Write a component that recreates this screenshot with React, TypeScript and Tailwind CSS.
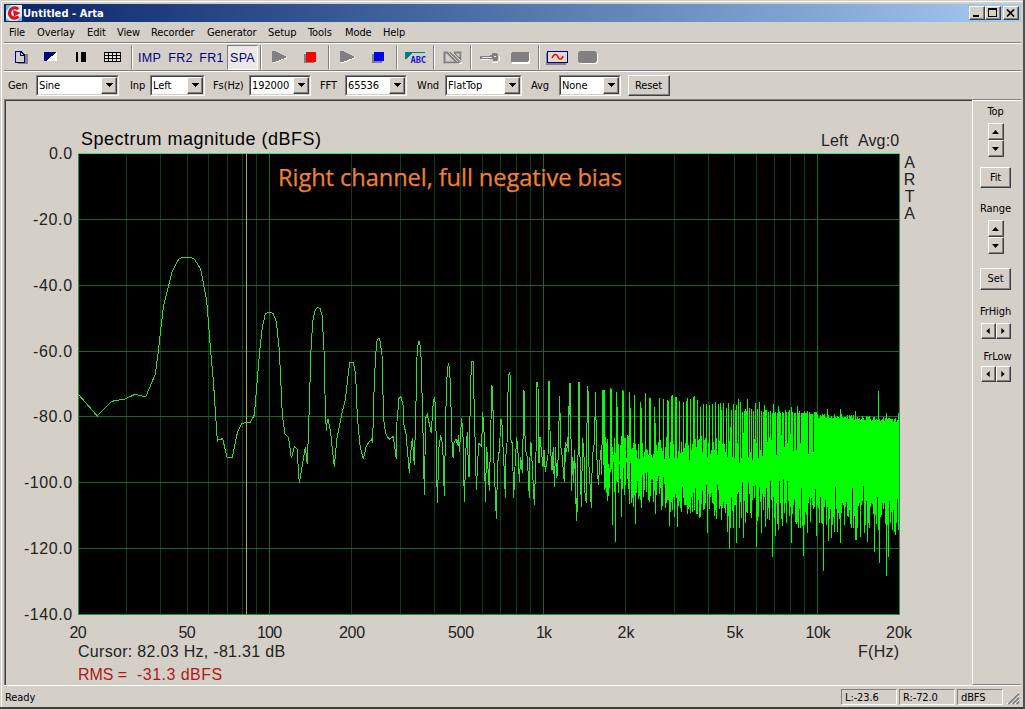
import type { ReactNode } from "react";

type Point = [number, number];

const MENU: [string, string][] = [
  ["File", "w-[28px]"], ["Overlay", "w-[50px]"], ["Edit", "w-[30px]"], ["View", "w-[34px]"],
  ["Recorder", "w-[56px]"], ["Generator", "w-[61px]"], ["Setup", "w-[40px]"], ["Tools", "w-[37px]"],
  ["Mode", "w-[38px]"], ["Help", "w-[33px]"],
];

/* ---------- spectrum data (thirds of a pixel, relative to each segment origin) ---------- */
const LOW: Point[] = [[25,493],[82,558],[125,514],[165,507],[195,493],[227,501],[256,432],[265,365],[272,300],[281,225],[295,170],[306,125],[327,86],[340,82],[360,82],[372,86],[392,117],[401,165],[410,210],[422,365],[430,450],[442,633],[444,630],[458,626],[471,682],[487,682],[503,604],[515,581],[530,576],[541,577],[553,555],[569,363],[577,292],[586,252],[597,246],[609,250],[619,275],[628,360],[637,555],[645,612],[656,624],[664,685],[673,650],[681,657],[688,760],[706,650],[712,703],[717,555],[723,360],[728,275],[736,238],[744,232],[750,235],[757,258],[757,270]];
const MID: Point[] = [[7,0],[12,90],[16,265],[19,334],[21,310],[24,298],[31,330],[43,442],[50,360],[67,275],[76,240],[85,160],[89,127],[100,127],[107,165],[112,290],[120,376],[130,418],[139,377],[155,357],[158,370],[161,240],[166,120],[170,65],[175,55],[179,56],[186,105],[191,300],[197,340],[207,358],[220,349],[229,418],[231,305],[237,235],[243,230],[249,255],[251,310],[258,342],[268,458],[272,400],[277,355],[283,434],[287,290],[291,110],[295,64],[299,64],[303,110],[308,290],[313,524],[317,295],[322,284],[334,340],[338,265],[343,230],[347,260],[349,400],[352,548],[357,380],[362,346],[368,375],[373,527],[377,290],[381,170],[385,130],[389,145],[394,290],[397,400],[400,415],[402,370],[408,358],[413,375],[415,345],[418,395],[425,294],[429,350],[433,545],[438,385],[442,337],[446,468],[449,468],[450,290],[454,125],[460,125],[463,290],[466,380],[469,509],[476,370],[485,378],[488,275],[493,350],[496,545],[500,380],[508,512],[513,300],[515,198],[518,200],[521,405],[529,596],[533,430],[538,390],[543,298],[547,320],[550,410],[553,450],[556,533],[557,415],[561,370],[565,170],[568,157],[571,170],[573,360],[577,370],[581,535],[585,440],[590,352],[595,410],[598,487],[602,410],[607,458],[612,211],[616,390],[622,410],[628,533],[630,410],[633,367],[643,554],[648,400],[651,187],[654,200],[657,430],[660,350],[669,440],[672,390],[676,455],[684,405],[687,182],[691,380],[696,450],[700,380],[703,500],[707,380],[709,475],[713,460],[719,227],[722,375],[726,405],[733,487],[737,370],[745,385],[749,190],[752,190],[754,512],[757,410],[760,490],[763,390],[767,500],[769,602],[773,520],[776,187],[779,187]];
const HIGH: Point[] = [[20,275],[26,210],[28,69],[32,69],[34,392],[38,295],[40,360],[44,270],[50,482],[53,405],[56,66],[59,66],[60,290],[64,440],[68,235],[72,290],[75,400],[79,430],[82,78],[85,100],[87,320],[94,443],[97,290],[103,250],[107,96],[109,260],[115,375],[122,270],[125,345],[128,89]];

/* ---------- dense part: one vertical bar per column ---------- */
const HARMONICS: Point[] = [[129,89],[132,89],[150,84],[153,86],[170,96],[172,140],[188,89],[191,93],[207,96],[210,145],[223,105],[240,126],[243,145],[255,99],[257,99],[269,114],[272,114],[284,141],[287,190],[298,114],[311,117],[323,120],[326,123],[334,108],[337,105],[347,111],[350,111],[359,123],[371,126],[380,123],[383,114],[392,118],[401,111],[404,108],[413,120],[422,141],[431,132],[440,132],[449,136],[458,132],[467,126],[475,132],[482,129],[485,150],[491,129],[499,143],[506,129],[514,147],[520,132],[527,135],[535,117],[538,135]];
const DIPS: Point[] = [[137,385],[142,422],[157,495],[163,395],[166,545],[175,400],[185,470],[193,405],[214,430],[226,491],[230,400],[243,443],[250,410],[259,395],[267,425],[281,425],[286,461],[299,403],[304,450],[318,428],[329,497],[332,455],[338,450],[344,470],[352,500],[362,445],[374,435],[378,435],[386,446],[398,455],[404,450],[412,461],[430,450],[437,428],[443,518],[452,410],[467,450],[470,476],[485,480],[495,460],[503,515],[509,568],[519,505],[524,443],[530,548],[538,505]];
const DIPS_TOP: Point[] = [[1,443],[4,350],[10,445],[16,375],[19,489],[25,335],[28,445],[37,305],[40,475],[47,430],[55,308],[62,400],[70,318],[76,315],[79,500],[88,320],[93,460],[100,390],[106,442],[109,325],[118,420],[121,302],[127,530],[130,352],[137,467],[146,450],[148,302],[157,437],[160,296],[166,370],[172,302],[184,488],[190,375],[195,425],[205,445],[211,445],[214,325],[220,527],[226,395],[232,458],[238,350],[241,425],[256,328],[259,467],[268,430],[272,350],[280,572],[286,360],[296,482],[305,473],[314,455],[316,322],[322,455],[332,490],[344,435],[346,380],[356,410],[366,325],[375,480],[378,480],[382,445],[391,470],[401,318],[404,460],[412,485],[421,382],[433,515],[442,352],[448,550],[453,405],[457,370],[463,370],[469,587],[476,530],[479,362],[482,430],[496,465],[500,430],[502,358],[506,450]];
const GAPS: Point[] = [[1,140],[7,232],[13,234],[23,190],[28,248],[34,235],[40,160],[55,232],[61,215],[67,240],[73,178],[79,190],[86,235],[92,210],[97,228],[112,185],[118,170],[124,180],[139,225],[154,165],[163,200],[172,190],[181,163],[190,212],[199,210],[211,190],[235,222],[250,215]];
const SPIKES: Point[] = [[10,72],[19,75],[25,57],[31,66],[52,57],[76,70],[88,66],[103,74],[130,72],[145,78],[185,82],[202,78],[292,87],[331,88],[376,94],[445,33],[469,98],[505,98]];

const rand = (n: number) => {
  const v = Math.sin(n * 127.1 + 11.7) * 43758.5453;
  return v - Math.floor(v);
};

const columns = (list: Point[]) => new Map(list.map(([x, y]) => [Math.floor(x / 3), y / 3]));

function denseBars() {
  const bars: { x: number; top: number; bottom: number }[] = [];
  const peaks = columns(HARMONICS);
  const dips = columns(DIPS);
  for (let c = 43; c < 170; c++) {
    const t = c / 180;
    const spread = c < 75 ? 34 : 24;
    const top = peaks.get(c) ?? (91 - t * 6 + (rand(c) - 0.45) * spread);
    const bottom = dips.get(c) ?? (106 + Math.min(t, 0.75) * 48 + (rand(c + 500) - 0.5) * (spread + 12));
    bars.push({ x: 560 + c, top: 360 + top, bottom: 360 + bottom });
  }
  const gaps = columns(GAPS);
  const spikes = columns(SPIKES);
  const lower = columns(DIPS_TOP);
  for (let c = 0; c < 169; c++) {
    const level = c < 88 ? 27 + c * 0.045 : 33 + (c - 88) * 0.055;
    const top = spikes.get(c) ?? gaps.get(c) ?? (level + rand(c + 900) * (c < 88 ? 4 : 5));
    const bottom = lower.get(c) ?? (126 + c * 0.07 + (rand(c + 1300) - 0.5) * 30);
    bars.push({ x: 730 + c, top: 380 + top, bottom: 380 + bottom });
  }
  return bars;
}

const BARS = denseBars().map((b) => `M${b.x + 0.5} ${b.top.toFixed(1)}V${b.bottom.toFixed(1)}`).join("");

const line = (pts: Point[], ox: number, oy: number) =>
  pts.map(([x, y]) => `${(ox + x / 3).toFixed(2)},${(oy + y / 3).toFixed(2)}`).join(" ");

const xOf = (f: number) => Math.round(269 + 273.9 * Math.log10(f / 100)) + 0.5;
const MINOR = [30, 40, 50, 60, 70, 80, 90, 200, 300, 400, 500, 600, 700, 800, 900, 2000, 3000, 4000, 5000, 6000, 7000, 8000, 9000];
const Y_TICKS = [153.5, 219.5, 285.5, 351.5, 416.5, 482.5, 548.5, 614.5];
const X_LABELS: [string, number, number][] = [["20", 78, 17], ["50", 187, 17], ["100", 269.5, 25], ["200", 352, 26], ["500", 461, 26], ["1k", 544, 16], ["2k", 626, 17], ["5k", 735, 17], ["10k", 818, 25], ["20k", 899, 26]];

function Chart() {
  return (
    <svg width="966" height="584" viewBox="6 101 966 584" className="block font-['Liberation_Sans',sans-serif] text-[16px]">
      <rect x="78" y="153" width="822" height="462" fill="#000" />
      <g shapeRendering="crispEdges" fill="none">
        <g stroke="#0c3c18">
          {MINOR.map((f) => <path key={f} d={`M${xOf(f)} 154V614`} />)}
        </g>
        <g stroke="#18682e">
          {[100, 1000, 10000].map((f) => <path key={f} d={`M${xOf(f)} 154V614`} />)}
          {Y_TICKS.map((y) => <path key={y} d={`M78 ${y}H900`} />)}
        </g>
        <path d="M78.5 153V615M899.5 153V615M78 614.5H900" stroke="#17934a" />
        <path d="M78 153.5H900" stroke="#4fd873" />
        <path d="M246.5 154V614" stroke="#b8a83c" />
        <g stroke="#32dc32">
          <polyline points={line(LOW, 70, 230)} />
          <polyline points={line(MID, 320, 320)} />
          <polyline points={line(HIGH, 560, 360)} />
        </g>
        <path d="M564.5 448V482M568 440V452" stroke="#32dc32" />
        <path d={BARS} stroke="#00ff00" />
      </g>
      <text x="81" y="145" fontSize="18" textLength="240" fill="#000">Spectrum magnitude (dBFS)</text>
      <text x="821" y="146" textLength="27" fill="#222">Left</text>
      <text x="858" y="146" textLength="41" fill="#222">Avg:0</text>
      {["A", "R", "T", "A"].map((ch, i) => <text key={i} x="909.5" y={168 + i * 17} textAnchor="middle" fill="#222">{ch}</text>)}
      {Y_TICKS.map((y, i) => {
        const label = i === 0 ? "0.0" : `-${i * 20}.0`;
        const w = i === 0 ? 23 : i < 5 ? 39 : 48;
        return <text key={y} x={72 - w} y={y + 5.5} textLength={w} fill="#222">{label}</text>;
      })}
      {X_LABELS.map(([s, x, w]) => <text key={s} x={x - w / 2} y="638" textLength={w} fill="#222">{s}</text>)}
      <text x="78" y="657" textLength="207" fill="#222">Cursor: 82.03 Hz, -81.31 dB</text>
      <text x="858" y="657" textLength="41" fill="#222">F(Hz)</text>
      <text x="78" y="680" textLength="49" fill="#b01818">RMS =</text>
      <text x="137" y="680" textLength="85" fill="#b01818">-31.3 dBFS</text>
      <text x="278" y="186" fontSize="24.5" textLength="344" lengthAdjust="spacingAndGlyphs" fill="#f08038" stroke="#f08038" strokeWidth="0.25" className="font-['Open_Sans',sans-serif]">Right channel, full negative bias</text>
    </svg>
  );
}

/* ---------- toolbar ---------- */
function Sep({ narrow }: { narrow?: boolean }) {
  return (
    <div className={narrow ? "flex h-[24px] w-[5px] shrink-0 justify-center" : "flex h-[24px] w-[6px] shrink-0 justify-center"}>
      <div className="w-[2px] border-l border-r border-l-[#808080] border-r-white" />
    </div>
  );
}

function Tool({ children }: { children: ReactNode }) {
  return (
    <div className="h-[24px] w-[31px] shrink-0">
      <svg width="31" height="24" viewBox="0 0 31 24" shapeRendering="crispEdges">{children}</svg>
    </div>
  );
}

function TextTool({ label, active }: { label: string; active?: boolean }) {
  return (
    <div className={active
      ? "flex h-[25px] w-[31px] shrink-0 items-center justify-center border border-b-white border-l-[#808080] border-r-white border-t-[#808080] bg-[#ebe9e5] pt-[2px]"
      : "flex h-[25px] w-[31px] shrink-0 items-center justify-center pt-[2px]"}>
      <span className="font-['Liberation_Sans',sans-serif] text-[12.500px] leading-none tracking-[0.3px] text-[#000080]">{label}</span>
    </div>
  );
}

const Play = () => (
  <Tool>
    <path d="M9 7V18H11L23 13V12L11 6Z" fill="#fff" />
    <path d="M8 6H11L22 11.5V12.5L11 17H8Z" fill="#808080" />
  </Tool>
);

function Toolbar() {
  return (
    <div className="flex h-[27px] items-center border-t border-white pl-px">
      <Tool>
        <path d="M13 9H23V19H13Z" fill="#808080" />
        <path d="M10.5 6.500H16L19.500 10V17.500H10.500Z" fill="#d4d0c8" stroke="#000080" />
        <path d="M15.500 7V10.500H19" fill="none" stroke="#000080" />
      </Tool>
      <Tool>
        <path d="M8 7H21L10 16H8Z" fill="#000080" />
        <path d="M21 7V16H10Z" fill="#fff" />
      </Tool>
      <Tool><path d="M9 7H11V17H9ZM14 7H19V17H14Z" fill="#000" /></Tool>
      <Tool>
        <path d="M6 7H23V17H6Z" fill="#000" />
        <path d="M7 8h3v2h-3zm4 0h3v2h-3zm4 0h3v2h-3zm4 0h3v2h-3zM7 11h3v2h-3zm4 0h3v2h-3zm4 0h3v2h-3zm4 0h3v2h-3zM7 14h3v2h-3zm4 0h3v2h-3zm4 0h3v2h-3zm4 0h3v2h-3z" fill="#e4e1db" />
      </Tool>
      <Sep narrow />
      <TextTool label="IMP" />
      <TextTool label="FR2" />
      <TextTool label="FR1" />
      <TextTool label="SPA" active />
      <Sep />
      <Play />
      <Tool><path d="M9 9H19V18H9Z" fill="#808080" /><path d="M11 7H21V17H11Z" fill="#f00" /></Tool>
      <Sep />
      <Play />
      <Tool><path d="M9 9H19V18H9Z" fill="#808080" /><path d="M11 7H21V16H11Z" fill="#00f" /></Tool>
      <Sep />
      <Tool>
        <path d="M5 7H25V8H13L6 14H5Z" fill="#008080" />
        <text x="10.500" y="17.500" fontSize="9" fontWeight="bold" textLength="15.500" lengthAdjust="spacingAndGlyphs" fill="#1414d8" className="font-['DejaVu_Sans_Mono',monospace]">ABC</text>
      </Tool>
      <Sep />
      <Tool>
        <g shapeRendering="geometricPrecision" fill="none">
          <path d="M8 18.500H24.500V8" stroke="#fff" />
          <path d="M7.500 7.500H10L20 17.500H7.500ZM12.500 7.500L22.500 17.500M17 7.500H23.500V15L17 8.500" stroke="#808080" strokeWidth="2" />
          <path d="M12 8L21 17M16.500 8.500L24 16" stroke="#f4f2ee" strokeWidth="0.700" />
        </g>
      </Tool>
      <Sep />
      <Tool>
        <path d="M7 14.500H16M18 17.500H24M25.500 11V16" stroke="#fff" fill="none" />
        <path d="M6 11H16V10H18V8H23V9H24V15H23V16H19V14H6Z" fill="#808080" />
        <path d="M8 12.500H18M20 11.500H22" stroke="#ece9e2" />
      </Tool>
      <Tool><rect x="7" y="8" width="18" height="11" rx="1" fill="#fff" /><rect x="6" y="7" width="18" height="10" rx="2" fill="#808080" /></Tool>
      <Sep />
      <Tool>
        <path d="M5 8V19H24" fill="none" stroke="#808080" strokeWidth="2" />
        <rect x="5.500" y="6.500" width="20" height="11" rx="1" fill="#e2d7d2" stroke="#000090" />
        <path d="M10 13C12 8 15 9 16 12S20 15 21 11" fill="none" stroke="#f00000" strokeWidth="1.400" shapeRendering="geometricPrecision" />
      </Tool>
      <Tool>
        <g shapeRendering="geometricPrecision"><rect x="6" y="7" width="19" height="12" rx="3" fill="#fff" /><rect x="5" y="6" width="19" height="12" rx="3" fill="#808080" /></g>
      </Tool>
    </div>
  );
}

const RAISED = "border border-b-[#404040] border-l-white border-r-[#404040] border-t-white shadow-[inset_-1px_-1px_0_#808080]";

function Field({ label, value, before, width }: { label: string; value: string; before: string; width: string }) {
  return (
    <>
      <span className={`shrink-0 whitespace-nowrap pt-[2px] ${before}`}>{label}</span>
      <div className={`flex h-[21px] shrink-0 border border-b-white border-l-[#808080] border-r-white border-t-[#808080] ${width}`}>
        <div className="flex min-w-0 flex-1 items-center border border-b-[#d4d0c8] border-l-[#404040] border-r-[#d4d0c8] border-t-[#404040] bg-white">
          <span className="min-w-0 flex-1 whitespace-nowrap pl-px pt-[2px]">{value}</span>
          <div className={`flex h-[17px] w-[16px] shrink-0 items-center justify-center bg-[#d4d0c8] ${RAISED}`}>
            <svg width="7" height="4" shapeRendering="crispEdges"><path d="M0 0H7L3.500 4Z" /></svg>
          </div>
        </div>
      </div>
    </>
  );
}

function Settings() {
  return (
    <div className="flex h-[27px] items-center border-t border-white pl-[4px]">
      <Field label="Gen" value="Sine" before="w-[28px]" width="w-[83px]" />
      <Field label="Inp" value="Left" before="ml-[11px] w-[20px]" width="w-[55px]" />
      <Field label="Fs(Hz)" value="192000" before="ml-[8px] w-[36px]" width="w-[62px]" />
      <Field label="FFT" value="65536" before="ml-[9px] w-[25px]" width="w-[62px]" />
      <Field label="Wnd" value="FlatTop" before="ml-[10px] w-[28px]" width="w-[77px]" />
      <Field label="Avg" value="None" before="ml-[9px] w-[28px]" width="w-[62px]" />
      <div className={`ml-[7px] flex h-[21px] w-[42px] items-center justify-center pr-px pt-px ${RAISED}`}>Reset</div>
    </div>
  );
}

const ARROWS = { up: "M3.500 0L7 4H0Z", down: "M0 0H7L3.500 4Z", left: "M4 0V7L0 3.500Z", right: "M0 0V7L4 3.500Z" };

function Arrow({ dir }: { dir: keyof typeof ARROWS }) {
  const side = dir === "left" || dir === "right";
  return (
    <div className={`flex items-center justify-center ${RAISED} ${side ? "h-[16px] w-[15px]" : "h-[17px] w-[16px]"}`}>
      <svg width={side ? 4 : 7} height={side ? 6 : 4} viewBox={side ? "0 0 4 7" : "0 0 7 4"}><path d={ARROWS[dir]} /></svg>
    </div>
  );
}

function SidePanel() {
  return (
    <div className="flex w-[49px] shrink-0 flex-col items-center border-b border-l border-t border-b-[#808080] border-l-white border-t-[#808080]">
      <div className="flex w-full flex-col items-center border-t border-white pt-[4px] pr-[3px]">
        <span className="h-[14px]">Top</span>
        <div className="mt-[4px]"><Arrow dir="up" /><Arrow dir="down" /></div>
        <div className={`mt-[10px] flex h-[21px] w-[31px] items-center justify-center ${RAISED}`}>Fit</div>
        <span className="mt-[14px] h-[14px]">Range</span>
        <div className="mt-[4px]"><Arrow dir="up" /><Arrow dir="down" /></div>
        <div className={`mt-[14px] flex h-[22px] w-[31px] items-center justify-center ${RAISED}`}>Set</div>
        <span className="mt-[15px] h-[14px]">FrHigh</span>
        <div className="mt-[4px] flex"><Arrow dir="left" /><Arrow dir="right" /></div>
        <span className="ml-[4px] mt-[11px] h-[14px]">FrLow</span>
        <div className="mt-[2px] flex"><Arrow dir="left" /><Arrow dir="right" /></div>
      </div>
    </div>
  );
}

function TitleBar() {
  const btn = `flex h-[14px] w-[16px] items-center justify-center bg-[#d4d0c8] ${RAISED}`;
  return (
    <div className="flex h-[18px] shrink-0 items-center bg-gradient-to-r from-[#0a246a] to-[#a6caf0] px-[2px]">
      <svg width="16" height="16" viewBox="0 0 16 16">
        <rect width="16" height="16" fill="#d8eef4" />
        <path d="M0 0H5L0 6ZM11 16H16V11ZM0 13L4 16H0Z" fill="#70bccc" />
        <path d="M12.300 4.200A5.200 5.200 0 1 0 12.500 11.500" fill="none" stroke="#d81424" strokeWidth="3.200" />
        <path d="M7 5L14.500 8L8 11.500Z" fill="#d81424" />
      </svg>
      <span className="ml-px flex-1 whitespace-nowrap font-['DejaVu_Sans_Condensed','DejaVu_Sans',sans-serif] text-[11px] font-bold leading-none tracking-[0.05px] text-white">Untitled - Arta</span>
      <div className={btn}><svg width="10" height="10" shapeRendering="crispEdges"><path d="M1 7H7V9H1Z" /></svg></div>
      <div className={btn}><svg width="10" height="10" shapeRendering="crispEdges"><path d="M0 0H9V9H0ZM1 2V8H8V2Z" fillRule="evenodd" /></svg></div>
      <div className={`ml-[2px] ${btn}`}><svg width="10" height="8"><path d="M1 .5L8 7.500M8 .5L1 7.500" stroke="#000" strokeWidth="1.700" /></svg></div>
    </div>
  );
}

function StatusCell({ children, width }: { children: ReactNode; width: string }) {
  return <div className={`flex h-[16px] items-center border border-b-white border-l-[#808080] border-r-white border-t-[#808080] pl-[3px] pt-[2px] ${width}`}>{children}</div>;
}

export default function App() {
  return (
    <div className="h-[709px] w-[1025px] overflow-hidden border-b-2 border-r-2 border-b-[#404040] border-r-[#505050] bg-[#d4d0c8] font-['DejaVu_Sans_Condensed','DejaVu_Sans',sans-serif] text-[11px] leading-[14px] tracking-[-0.1px] text-black">
      <div className="flex h-[707px] w-[1023px] flex-col border-l border-t border-[#d4d0c8]">
        <div className="flex min-h-0 flex-1 flex-col border-l border-t border-white pl-[2px] pr-[2px] pt-[2px]">
          <TitleBar />
          <div className="flex h-[21px] shrink-0 items-center border-b border-[#808080] pl-[5px] pt-[2px]">
            {MENU.map(([name, width]) => <span key={name} className={`whitespace-nowrap ${width}`}>{name}</span>)}
          </div>
          <div className="h-[28px] shrink-0 border-b border-[#808080]"><Toolbar /></div>
          <div className="h-[28px] shrink-0"><Settings /></div>
          <div className="flex h-[586px] shrink-0">
            <div className="w-[968px] shrink-0 border-l border-t border-[#808080]">
              <div className="border-l border-t border-[#404040]"><Chart /></div>
            </div>
            <SidePanel />
          </div>
          <div className="flex min-h-0 flex-1 items-center border-t border-white pl-px">
            <span className="flex-1 pt-[2px]">Ready</span>
            <div className="flex gap-[2px]">
              <StatusCell width="w-[56px]">L:-23.6</StatusCell>
              <StatusCell width="w-[56px]">R:-72.0</StatusCell>
              <StatusCell width="w-[46px]">dBFS</StatusCell>
            </div>
            <svg width="18" height="16" viewBox="0 0 18 16" className="shrink-0">
              <path d="M4 15L16 3M8 15L16 7M12 15L16 11" stroke="#fff" />
              <path d="M5.500 15L16 4.500M9.500 15L16 8.500M13.500 15L16 12.500" stroke="#808080" strokeWidth="1.800" />
            </svg>
          </div>
        </div>
      </div>
    </div>
  );
}
